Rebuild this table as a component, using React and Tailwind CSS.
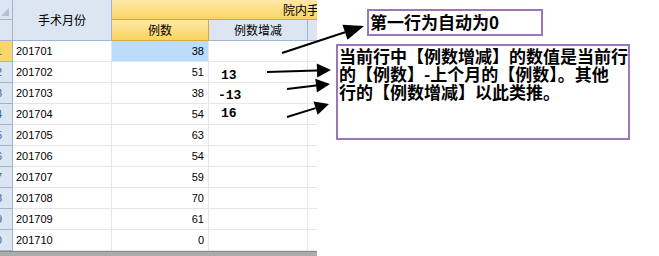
import React from 'react';

const rows = [
  ['201701', '38'],
  ['201702', '51'],
  ['201703', '38'],
  ['201704', '54'],
  ['201705', '63'],
  ['201706', '54'],
  ['201707', '59'],
  ['201708', '70'],
  ['201709', '61'],
  ['201710', '0'],
];

const cjk = { fontFamily: '"Noto Sans CJK SC", "Liberation Sans", sans-serif' };
const num = { fontFamily: '"Liberation Sans", "Noto Sans CJK SC", sans-serif' };

function Arrow({ x1, y1, x2, y2, len = 14, w = 7 }) {
  const dx = x2 - x1;
  const dy = y2 - y1;
  const d = Math.hypot(dx, dy);
  const ux = dx / d;
  const uy = dy / d;
  const bx = x2 - ux * len;
  const by = y2 - uy * len;
  const px = -uy;
  const py = ux;
  return (
    <g>
      <line x1={x1} y1={y1} x2={bx} y2={by} stroke="#000" strokeWidth="2" />
      <polygon
        points={`${x2},${y2} ${bx + px * w},${by + py * w} ${bx - px * w},${by - py * w}`}
        fill="#000"
      />
    </g>
  );
}

export default function App() {
  return (
    <div className="relative w-[659px] h-[256px] bg-white overflow-hidden">
      {/* grid */}
      <div className="w-[317px] flex flex-col text-[12px] text-black">
        <div className="grid grid-cols-[13px_99px_97px_99px_9px] grid-rows-[20px_21px]">
          <div className="bg-[#dce6f2] border-r border-b border-[#9fb5cd] relative">
            <svg className="absolute left-[1px] top-[8px]" width="8" height="8" viewBox="0 0 8 8">
              <polygon points="8,0 8,8 0,8" fill="#b3c2d3" />
            </svg>
          </div>
          <div
            className="row-span-2 bg-[#dce6f2] border-r border-b border-[#9fb5cd] flex items-center justify-center"
            style={cjk}
          >
            手术月份
          </div>
          <div
            className="col-span-3 bg-gradient-to-b from-[#fde9a8] to-[#fbd462] border-b border-[#d7a93c] overflow-hidden whitespace-nowrap pl-[171px] leading-[20px]"
            style={cjk}
          >
            院内手术
          </div>
          <div className="bg-[#dce6f2] border-r border-b border-[#9fb5cd]" />
          <div
            className="bg-gradient-to-b from-[#fde8a4] to-[#fbd35c] border-r border-b border-[#d7a93c] flex items-center justify-center"
            style={cjk}
          >
            例数
          </div>
          <div
            className="bg-[#dce6f2] border-r border-b border-[#9fb5cd] flex items-center justify-center"
            style={cjk}
          >
            例数增减
          </div>
          <div className="bg-[#dce6f2] border-b border-[#9fb5cd]" />
        </div>

        <div className="grid grid-cols-[13px_99px_97px_99px_9px] auto-rows-[21px]" style={num}>
          {rows.map(([m, c], i) => (
            <React.Fragment key={m}>
              <div
                className={`border-r border-b border-[#9fb5cd] overflow-hidden flex items-center justify-end pr-[10px] text-[11px] text-[#3f6593] ${
                  i === 0 ? 'bg-[#fcd56c]' : 'bg-[#dce6f2]'
                }`}
              >
                <span className="shrink-0">{i + 1}</span>
              </div>
              <div className="bg-white border-r border-b border-[#e6e6e6] flex items-center pl-[3px] text-[11px]">
                {m}
              </div>
              <div
                className={`border-r border-b border-[#e6e6e6] flex items-center justify-end pr-[4px] text-[11px] ${
                  i === 0 ? 'bg-[#bcdcfb]' : 'bg-white'
                }`}
              >
                {c}
              </div>
              <div className="bg-white border-r border-b border-[#e6e6e6]" />
              <div className="bg-white border-b border-[#e6e6e6]" />
            </React.Fragment>
          ))}
        </div>
        <div className="h-[5px] bg-[#ababab] border-t border-[#8a8a8a]" />
      </div>

      {/* hand-drawn annotations */}
      <svg className="absolute left-0 top-0 pointer-events-none" width="659" height="256">
        <Arrow x1={282} y1={53} x2={364} y2={26} len={20} w={8} />
        <Arrow x1={267} y1={72} x2={331} y2={70} />
        <Arrow x1={287} y1={89} x2={330} y2={84} />
        <Arrow x1={287} y1={117} x2={329} y2={104} />
      </svg>

      <span
        className="absolute left-[221px] top-[69px] text-[13px] font-bold leading-none"
        style={{ fontFamily: '"Liberation Mono", monospace' }}
      >
        13
      </span>
      <span
        className="absolute left-[218px] top-[89px] text-[13px] font-bold leading-none"
        style={{ fontFamily: '"Liberation Mono", monospace' }}
      >
        -13
      </span>
      <span
        className="absolute left-[221px] top-[107px] text-[13px] font-bold leading-none"
        style={{ fontFamily: '"Liberation Mono", monospace' }}
      >
        16
      </span>

      <div
        className="absolute left-[367px] top-[9px] w-[176px] h-[27px] border-2 border-[#9b77b8] pl-[1px] text-[17px] font-bold leading-[22px] text-black whitespace-nowrap"
        style={cjk}
      >
        第一行为自动为0
      </div>

      <div
        className="absolute left-[336px] top-[44px] w-[294px] h-[96px] border-2 border-[#9b77b8] pl-[1px] pt-[1px] text-[17px] font-bold leading-[18px] text-black whitespace-nowrap"
        style={cjk}
      >
        当前行中【例数增减】的数值是当前行
        <br />
        的【例数】-上个月的【例数】。其他
        <br />
        行的【例数增减】以此类推。
      </div>
    </div>
  );
}
